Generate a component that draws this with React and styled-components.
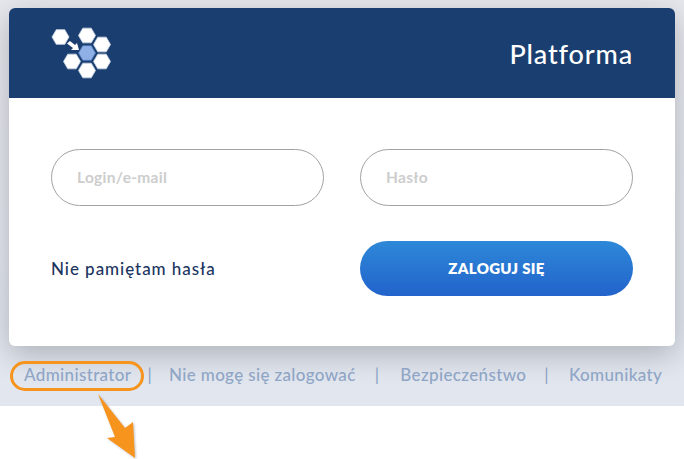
import styled, { createGlobalStyle } from "styled-components";

const GlobalStyle = createGlobalStyle`
  html, body {
    margin: 0;
    padding: 0;
    background: #fff;
    font-family: "Lato", "Open Sans", sans-serif;
  }
`;

const Page = styled.div`
  position: relative;
  width: 684px;
  height: 459px;
  overflow: hidden;
`;

const Backdrop = styled.div`
  height: 406px;
  box-sizing: border-box;
  padding: 8px 9px 0;
  background: linear-gradient(180deg, #e6e8ee 0%, #e1e6ef 100%);
`;

const Card = styled.div`
  height: 338px;
  border-radius: 6px;
  background: #fff;
  overflow: hidden;
  box-shadow: 0 8px 30px rgba(0, 0, 0, 0.24);
`;

const Header = styled.div`
  height: 90px;
  box-sizing: border-box;
  padding: 0 42px;
  background: #1a3e6f;
  display: flex;
  justify-content: space-between;
  align-items: center;
`;

const Logo = styled.svg`
  width: 64px;
  height: 66px;
  margin-top: 11px;
  display: block;
`;

const Title = styled.div`
  font-family: "Lato", sans-serif;
  font-size: 27px;
  font-weight: 500;
  letter-spacing: 0.85px;
  color: #fff;
  margin-top: 1px;
`;

const Form = styled.div`
  padding: 51px 42px 0;
  display: grid;
  grid-template-columns: 273px 273px;
  column-gap: 36px;
  row-gap: 35px;
  align-items: center;
`;

const Field = styled.div`
  height: 57px;
  box-sizing: border-box;
  padding-left: 25px;
  padding-bottom: 2px;
  border: 1px solid #a2a2a2;
  border-radius: 29px;
  display: flex;
  align-items: center;
  font-family: "Lato", sans-serif;
  font-size: 15.5px;
  font-weight: 700;
  letter-spacing: 0.3px;
  color: #cdcdcd;
`;

const Forgot = styled.div`
  font-family: "Lato", sans-serif;
  font-size: 17px;
  font-weight: 500;
  letter-spacing: 0.95px;
  color: #1c3560;
`;

const Submit = styled.button`
  height: 55px;
  border: 0;
  border-radius: 28px;
  padding: 0 0 2px;
  background: linear-gradient(180deg, #2e88d8 0%, #2263cb 100%);
  font-family: "Lato", sans-serif;
  font-size: 15px;
  font-weight: 800;
  letter-spacing: 0.3px;
  color: #fff;
`;

const FooterLinks = styled.div`
  height: 56px;
  margin-left: 15px;
  display: flex;
  align-items: center;
  font-family: "Lato", sans-serif;
  font-size: 17px;
  font-weight: 500;
  letter-spacing: 0.35px;
  color: #8fa5c5;
`;

const FooterLink = styled.span`
  white-space: nowrap;
`;

const Divider = styled.span`
  margin: ${(p) => p.$margin};
`;

const Ring = styled.div`
  position: absolute;
  left: 10px;
  top: 361px;
  width: 134px;
  height: 30px;
  box-sizing: border-box;
  border: 3px solid #f7941e;
  border-radius: 15px;
`;

const Arrow = styled.svg`
  position: absolute;
  left: 90px;
  top: 390px;
  width: 60px;
  height: 69px;
  filter: drop-shadow(1px 1px 1px rgba(0, 0, 0, 0.25));
`;

const hexagon = (cx, cy, r) => {
  const h = r * 0.866;
  return `${cx - r},${cy} ${cx - r / 2},${cy - h} ${cx + r / 2},${cy - h} ${cx + r},${cy} ${cx + r / 2},${cy + h} ${cx - r / 2},${cy + h}`;
};

// logo cells, relative to the svg
const CELLS = [
  [9.5, 11],
  [36, 9.5],
  [51, 18.5],
  [21, 35.5],
  [51, 35.5],
  [36, 44.5],
];

const App = () => {
  return (
    <Page>
      <GlobalStyle />
      <Backdrop>
        <Card>
          <Header>
            <Logo viewBox="0 0 64 66">
              {CELLS.map(([x, y]) => (
                <polygon
                  key={`${x}-${y}`}
                  points={hexagon(x, y, 8.5)}
                  fill="#fff"
                  stroke="#c9d4e4"
                  strokeWidth="0.8"
                />
              ))}
              <polygon points={hexagon(36, 27, 8.5)} fill="#8fb0e6" stroke="#4e78b8" strokeWidth="0.8" />
              <path d="M16 17.5 L19 15 L24 19 L26 17 L28 24 L20 24 L22 22 Z" fill="#fff" />
            </Logo>
            <Title>Platforma</Title>
          </Header>
          <Form>
            <Field>Login/e-mail</Field>
            <Field>Hasło</Field>
            <Forgot>Nie pamiętam hasła</Forgot>
            <Submit>ZALOGUJ SIĘ</Submit>
          </Form>
        </Card>
        <FooterLinks>
          <FooterLink>Administrator</FooterLink>
          <Divider $margin="0 17px 0 16px">|</Divider>
          <FooterLink>Nie mogę się zalogować</FooterLink>
          <Divider $margin="0 21px 0 19px">|</Divider>
          <FooterLink>Bezpieczeństwo</FooterLink>
          <Divider $margin="0 20px 0 18px">|</Divider>
          <FooterLink>Komunikaty</FooterLink>
        </FooterLinks>
      </Backdrop>
      <Ring />
      <Arrow viewBox="0 0 60 69">
        <polygon points="8,4 35,38 43,32 45,68 17,48 25,47" fill="#f7941e" />
      </Arrow>
    </Page>
  );
};

export default App;
